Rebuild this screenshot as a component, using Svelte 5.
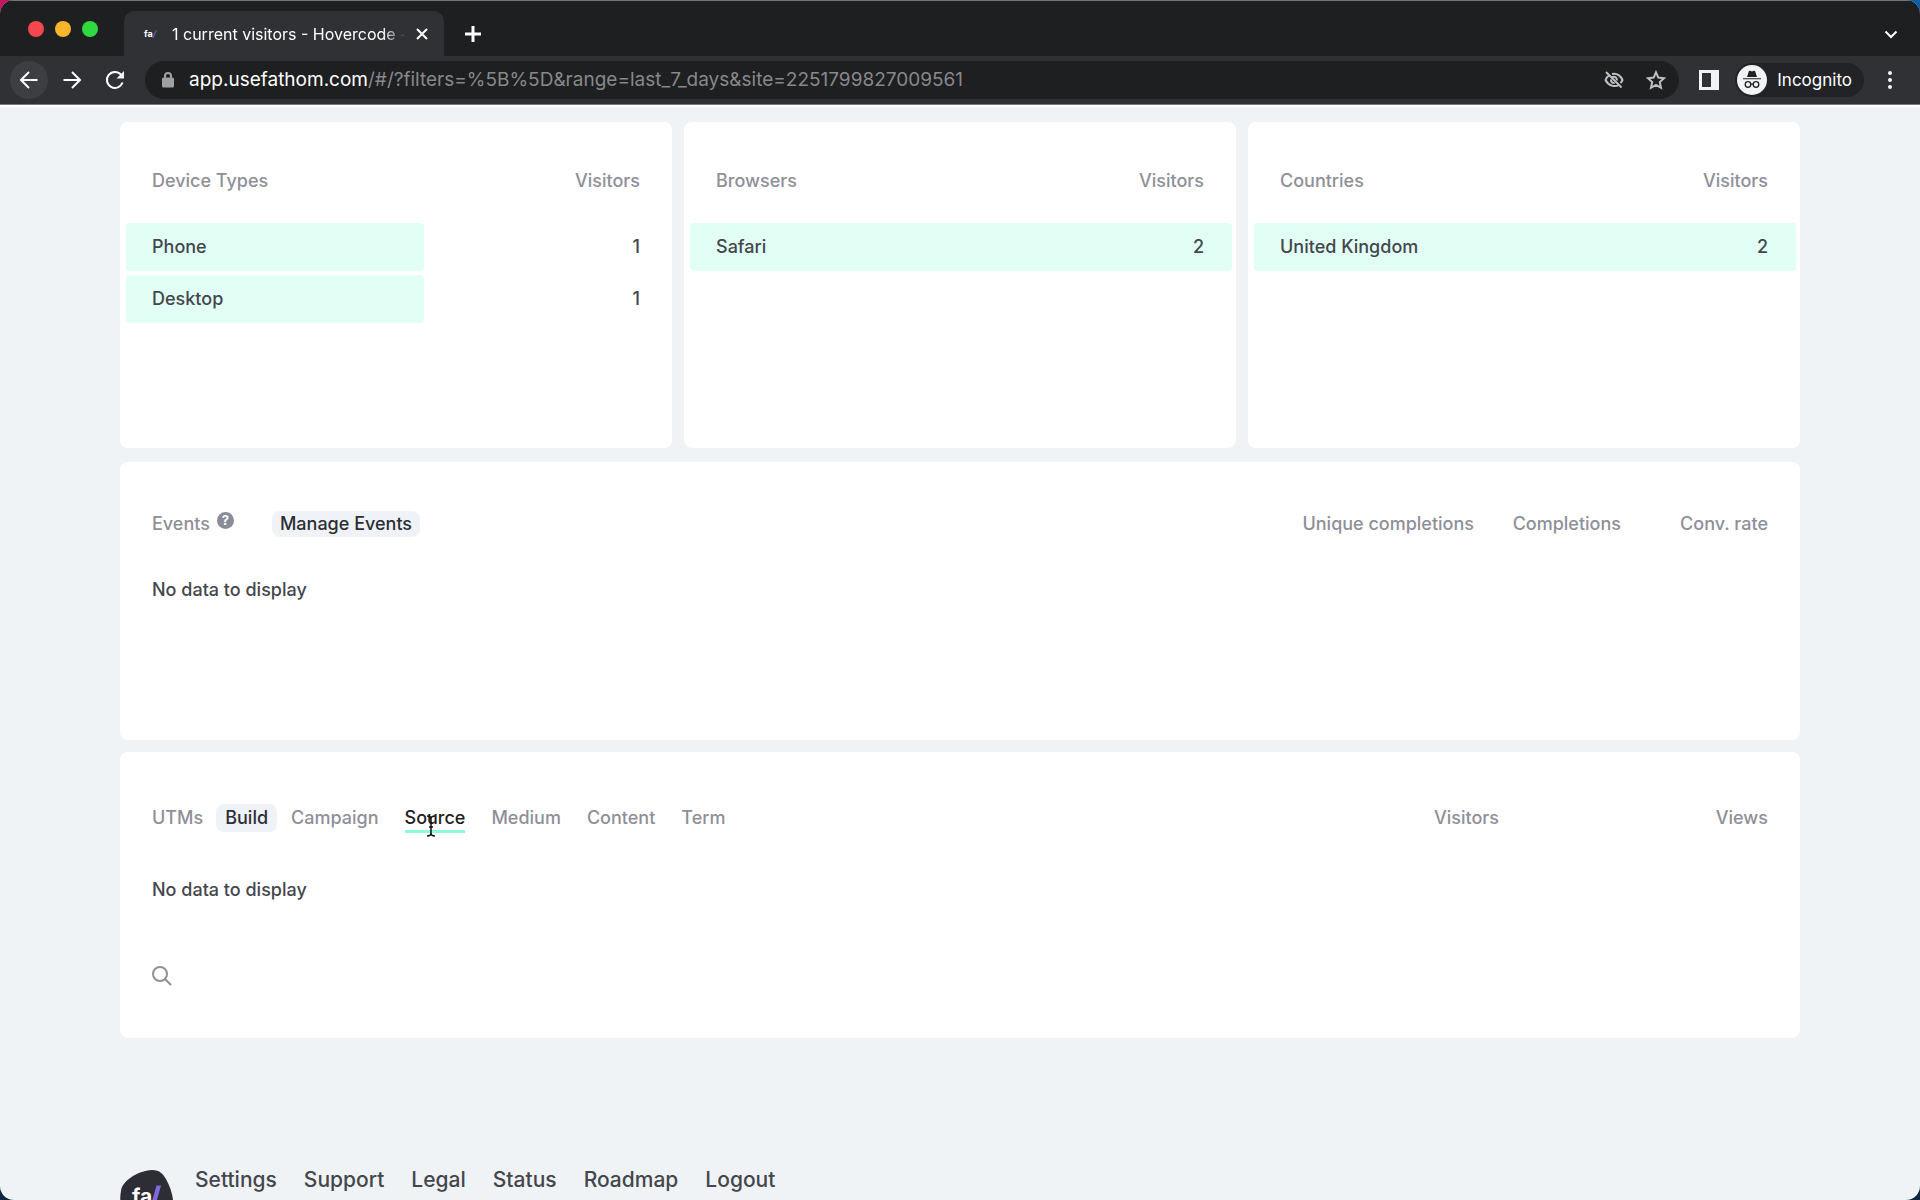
<script lang="ts">
  interface Row {
    name: string;
    visitors: number;
    share: number;
  }

  interface Panel {
    title: string;
    rows: Row[];
  }

  const panels: Panel[] = [
    {
      title: 'Device Types',
      rows: [
        { name: 'Phone', visitors: 1, share: 55 },
        { name: 'Desktop', visitors: 1, share: 55 },
      ],
    },
    { title: 'Browsers', rows: [{ name: 'Safari', visitors: 2, share: 100 }] },
    { title: 'Countries', rows: [{ name: 'United Kingdom', visitors: 2, share: 100 }] },
  ];

  const utmTabs = ['Campaign', 'Source', 'Medium', 'Content', 'Term'];
  const footerLinks = ['Settings', 'Support', 'Legal', 'Status', 'Roadmap', 'Logout'];

  let activeTab = $state('Source');
</script>

<div class="window">
  <header class="chrome">
    <div class="tabstrip">
      <div class="lights">
        <span class="light red"></span>
        <span class="light yellow"></span>
        <span class="light green"></span>
      </div>
      <div class="tab">
        <span class="favicon">fa<i>/</i></span>
        <span class="tab-title">1 current visitors - Hovercode -</span>
        <button class="icon-btn" aria-label="Close tab">
          <svg width="12" height="12" viewBox="0 0 12 12"><path d="M1 1l10 10M11 1L1 11" /></svg>
        </button>
      </div>
      <button class="icon-btn new-tab" aria-label="New tab">
        <svg width="16" height="16" viewBox="0 0 16 16"><path d="M8 0v16M0 8h16" /></svg>
      </button>
      <button class="icon-btn tab-search" aria-label="Search tabs">
        <svg width="14" height="14" viewBox="0 0 14 14"><path d="M1.500 4.500l5.500 5.500 5.500-5.500" /></svg>
      </button>
    </div>

    <div class="toolbar">
      <button class="icon-btn nav-btn hovered" aria-label="Back">
        <svg width="20" height="20" viewBox="0 0 20 20"><path d="M18.500 10H2.500M10 2L2 10l8 8" /></svg>
      </button>
      <button class="icon-btn nav-btn" aria-label="Forward">
        <svg width="20" height="20" viewBox="0 0 20 20"><path d="M1.500 10h16M10 2l8 8-8 8" /></svg>
      </button>
      <button class="icon-btn nav-btn" aria-label="Reload">
        <svg width="20" height="20" viewBox="0 0 20 20">
          <path d="M17.500 12.500A8 8 0 1 1 16 4.700" />
          <path d="M19 1v7.500h-7.500z" class="solid" />
        </svg>
      </button>
      <div class="address">
        <svg class="lock" width="12" height="16" viewBox="0 0 12 16">
          <path d="M3 7V4a3 3 0 0 1 6 0v3" class="shackle" />
          <rect x="0" y="5.500" width="12" height="10" rx="1.500" />
        </svg>
        <span class="url"><b>app.usefathom.com</b>/#/?filters=%5B%5D&amp;range=last_7_days&amp;site=2251799827009561</span>
        <button class="icon-btn soft" aria-label="Third-party cookies blocked">
          <svg width="20" height="18" viewBox="0 0 20 18">
            <path d="M5.500 4A11 11 0 0 0 1.500 9c2.800 5.800 9.500 7.600 13.500 4.700M8 3c4.500-.8 8.500 1.700 10.500 6a11 11 0 0 1-2 3" />
            <path d="M8 6.200c2.600-1.400 5.300.4 4.800 3.300M7 8.500c-.2 2.300 1.500 3.900 3.600 3.500" />
            <path d="M2 1l15.500 15.500" />
          </svg>
        </button>
        <button class="icon-btn soft" aria-label="Bookmark this page">
          <svg width="20" height="20" viewBox="0 0 20 20">
            <path d="M10 2.300l2.300 5.300 5.800.6-4.300 3.900 1.200 5.700-5-2.900-5 2.900 1.200-5.700L1.900 8.200l5.800-.6z" />
          </svg>
        </button>
      </div>
      <button class="icon-btn panel-btn" aria-label="Side panel">
        <svg width="20" height="20" viewBox="0 0 20 20">
          <path d="M0 0h20v20H0zM3 3v14h9V3z" fill-rule="evenodd" class="solid" />
        </svg>
      </button>
      <button class="profile">
        <svg width="30" height="30" viewBox="0 0 30 30">
          <circle cx="15" cy="15" r="15" fill="#f1f3f4" />
          <path d="M6 13.200h18v1H6zM10 12l1.800-5.600c.2-.6.700-.8 1.300-.6l1.900.6 1.900-.6c.6-.2 1.100 0 1.300.6L20 12z" fill="#202124" />
          <g fill="none" stroke="#202124" stroke-width="1.300">
            <circle cx="11" cy="19.500" r="2.800" />
            <circle cx="19" cy="19.500" r="2.800" />
            <path d="M13.800 19.300q1.200-.9 2.400 0" />
          </g>
        </svg>
        Incognito
      </button>
      <button class="icon-btn menu-btn" aria-label="Menu">
        <svg width="4" height="18" viewBox="0 0 4 18">
          <circle cx="2" cy="2" r="2" class="solid" />
          <circle cx="2" cy="9" r="2" class="solid" />
          <circle cx="2" cy="16" r="2" class="solid" />
        </svg>
      </button>
    </div>
  </header>

  <main class="page">
    <div class="panels">
      {#each panels as panel}
        <section class="card panel">
          <table>
            <thead>
              <tr><th>{panel.title}</th><th class="num">Visitors</th></tr>
            </thead>
            <tbody>
              {#each panel.rows as row}
                <tr>
                  <td><span class="bar" style="width: {row.share}%"></span><span class="name">{row.name}</span></td>
                  <td class="num"><span class="name">{row.visitors}</span></td>
                </tr>
              {/each}
            </tbody>
          </table>
        </section>
      {/each}
    </div>

    <section class="card events">
      <table>
        <thead>
          <tr>
            <th>
              <div class="heading">
                Events
                <span class="help">?</span>
                <button class="pill">Manage Events</button>
              </div>
            </th>
            <th class="num">Unique completions</th>
            <th class="num col-event">Completions</th>
            <th class="num col-event">Conv. rate</th>
          </tr>
        </thead>
        <tbody>
          <tr><td colspan="4">No data to display</td></tr>
        </tbody>
      </table>
    </section>

    <section class="card utms">
      <table>
        <thead>
          <tr>
            <th>
              <div class="heading">
                UTMs
                <button class="pill build">Build</button>
                <div class="tabs">
                  {#each utmTabs as tab}
                    <button class="utm-tab" class:active={tab === activeTab} onclick={() => (activeTab = tab)}>
                      {tab}
                      {#if tab === 'Source'}
                        <svg class="ibeam" width="10" height="22" viewBox="0 0 10 22">
                          <path d="M1 1q4 0 4 3v14q0 3-4 3M9 1q-4 0-4 3v14q0 3 4 3M3 12h4" />
                        </svg>
                      {/if}
                    </button>
                  {/each}
                </div>
              </div>
            </th>
            <th class="num">Visitors</th>
            <th class="num col-views">Views</th>
          </tr>
        </thead>
        <tbody>
          <tr><td colspan="3">No data to display</td></tr>
        </tbody>
      </table>
      <button class="search" aria-label="Search UTMs">
        <svg width="20" height="20" viewBox="0 0 20 20">
          <circle cx="8" cy="8" r="7" />
          <path d="M13 13l6 6" />
        </svg>
      </button>
    </section>

    <footer>
      <svg class="logo" width="54" height="54" viewBox="0 0 54 54">
        <path d="M1 21C2 11 17 1 32 0c8 0 11 4 14 9 5 9 8 19 7 28-1 10-9 16-21 17C15 55 4 47 1 35c-1-5-1-9 0-14z" fill="#2d2e35" />
        <text x="12" y="34" fill="#fff">fa</text>
        <path d="M36.500 15.500h4.500L35 37h-4.500z" fill="#8168dd" />
      </svg>
      <nav>
        {#each footerLinks as link}
          <a href="#{link.toLowerCase()}">{link}</a>
        {/each}
      </nav>
    </footer>
  </main>
</div>

<style>
  :global(body) {
    margin: 0;
    background: linear-gradient(90deg, #c4145a 50%, #0b5fa5 50%) top / 100% 50% no-repeat #0d2742;
  }
  .window {
    box-sizing: border-box;
    height: 100vh;
    overflow: hidden;
    display: flex;
    flex-direction: column;
    border-radius: 14px;
    background: #eff3f6;
    font-family: Inter, "Liberation Sans", sans-serif;
    font-size: 18px;
    line-height: 24px;
    color: #44464b;
  }
  button {
    font: inherit;
    color: inherit;
    padding: 0;
    border: 0;
    background: none;
  }
  svg {
    display: block;
    flex: none;
  }

  /* browser frame */
  .chrome {
    flex: none;
    box-sizing: border-box;
    border-top: 1px solid #75787b;
    border-bottom: 1px solid #7b7c7f;
    background: #1e1f21;
    color: #fff;
  }
  .tabstrip {
    display: flex;
    align-items: center;
    box-sizing: border-box;
    height: 55px;
    padding: 10px 22px 0 28px;
  }
  .lights {
    display: flex;
    gap: 11px;
    width: 96px;
    padding-bottom: 9px;
  }
  .light {
    width: 16px;
    height: 16px;
    border-radius: 50%;
  }
  .red { background: #f5474f; }
  .yellow { background: #f7b52c; }
  .green { background: #2fd93f; }
  .tab {
    display: flex;
    align-items: center;
    box-sizing: border-box;
    width: 320px;
    height: 45px;
    padding: 0 16px 0 20px;
    border-radius: 10px 10px 0 0;
    background: #303135;
  }
  .favicon {
    width: 28px;
    font-size: 9px;
    font-weight: 700;
  }
  .favicon i { color: #6d5bd0; }
  .tab-title {
    flex: 1;
    min-width: 0;
    white-space: nowrap;
    font-size: 16px;
    mask-image: linear-gradient(90deg, #000 90%, transparent);
  }
  .icon-btn {
    display: flex;
    align-items: center;
    justify-content: center;
  }
  .icon-btn svg {
    fill: none;
    stroke: #fff;
    stroke-width: 2;
  }
  .icon-btn svg .solid {
    fill: #f1f3f4;
    stroke: none;
  }
  .tab .icon-btn { margin-left: 10px; }
  .new-tab { margin-left: 21px; }
  .new-tab svg { stroke-width: 3; }
  .tab-search { margin-left: auto; }
  .toolbar {
    display: flex;
    align-items: center;
    height: 48px;
    padding: 0 28px 0 10px;
    background: #303135;
  }
  .nav-btn {
    width: 38px;
    height: 38px;
    margin-right: 5px;
    border-radius: 50%;
  }
  .hovered { background: #3d3e41; }
  .address {
    flex: 1;
    min-width: 0;
    display: flex;
    align-items: center;
    gap: 22px;
    height: 38px;
    margin-left: 6px;
    padding: 0 13px 0 17px;
    border-radius: 19px;
    background: #1e1f21;
  }
  .lock { fill: #a0a1a4; }
  .shackle {
    fill: none;
    stroke: #a0a1a4;
    stroke-width: 2;
  }
  .url {
    flex: 1;
    min-width: 0;
    overflow: hidden;
    white-space: nowrap;
    margin-left: -7px;
    font-size: 19px;
    color: #87888b;
  }
  .url b {
    font-weight: 400;
    color: #fff;
  }
  .soft svg { stroke: #bdc1c6; }
  .panel-btn { margin-left: 20px; }
  .profile {
    display: flex;
    align-items: center;
    gap: 10px;
    height: 34px;
    margin-left: 16px;
    padding: 0 12px 0 2px;
    border-radius: 17px;
    background: #222326;
    font-size: 17px;
  }
  .menu-btn { margin-left: 24px; }

  /* dashboard */
  .page {
    display: flex;
    flex-direction: column;
    gap: 12px;
    padding: 15px 120px 0;
    border-top: 2px solid #fff;
    font-weight: 500;
  }
  .card {
    box-sizing: border-box;
    border-radius: 8px;
    background: #fff;
  }
  table {
    width: 100%;
    border-spacing: 0;
  }
  th,
  td {
    padding: 0;
    text-align: left;
    font-weight: 500;
  }
  th { color: #8e8f98; }
  .num { text-align: right; }

  .panels {
    display: grid;
    grid-template-columns: repeat(3, 1fr);
    gap: 12px;
    padding-bottom: 2px;
  }
  .panel {
    min-height: 326px;
    padding: 32px 4px 32px 6px;
  }
  .panel table { border-spacing: 0 4px; }
  .panel th { height: 46px; }
  .panel thead th { padding-bottom: 15px; }
  .panel tbody tr { position: relative; }
  .panel td { height: 48px; }
  .panel th:first-child,
  .panel td:first-child { padding-left: 26px; }
  .panel th:last-child,
  .panel td:last-child { padding-right: 28px; }
  .bar {
    position: absolute;
    inset: 0 auto 0 0;
    border-radius: 4px;
    background: #e2fff6;
  }
  .name { position: relative; }

  .events,
  .utms { padding: 42px 32px; }
  .events { min-height: 278px; }
  .utms {
    min-height: 286px;
    padding-top: 46px;
  }
  .events th,
  .utms th { height: 40px; }
  .events td {
    height: 48px;
    padding-top: 22px;
  }
  .utms td {
    height: 48px;
    padding-top: 28px;
  }
  .heading {
    display: flex;
    align-items: center;
  }
  .help {
    width: 17px;
    height: 17px;
    margin: 0 38px 8px 7px;
    border-radius: 50%;
    background: #8a8b98;
    color: #fff;
    font-size: 13px;
    font-weight: 700;
    line-height: 17px;
    text-align: center;
  }
  .pill {
    padding: 1px 8px;
    border-radius: 8px;
    background: #eff2f6;
    color: #2c2e33;
  }
  .build {
    margin: 0 14px 0 13px;
    padding: 2px 9px;
  }
  .col-event { width: 147px; }
  .col-views { width: 269px; }
  .tabs {
    display: flex;
    gap: 26px;
  }
  .utm-tab {
    position: relative;
    border-top: 3px solid transparent;
    border-bottom: 3px solid transparent;
  }
  .utm-tab.active {
    border-bottom-color: #8dfbd9;
    color: #1d1e22;
  }
  .ibeam {
    position: absolute;
    top: 9px;
    left: 21px;
    fill: none;
    stroke: #111;
    stroke-width: 1.5;
  }
  .search { margin-top: 52px; }
  .search svg {
    fill: none;
    stroke: #8e8f98;
    stroke-width: 2;
  }

  footer {
    display: flex;
    align-items: flex-start;
    gap: 21px;
    padding-top: 120px;
  }
  .logo text {
    font-size: 21px;
    font-weight: 700;
  }
  nav {
    display: flex;
    gap: 27px;
    font-size: 21px;
    line-height: 20px;
  }
  nav a {
    color: #44464b;
    text-decoration: none;
  }
</style>
